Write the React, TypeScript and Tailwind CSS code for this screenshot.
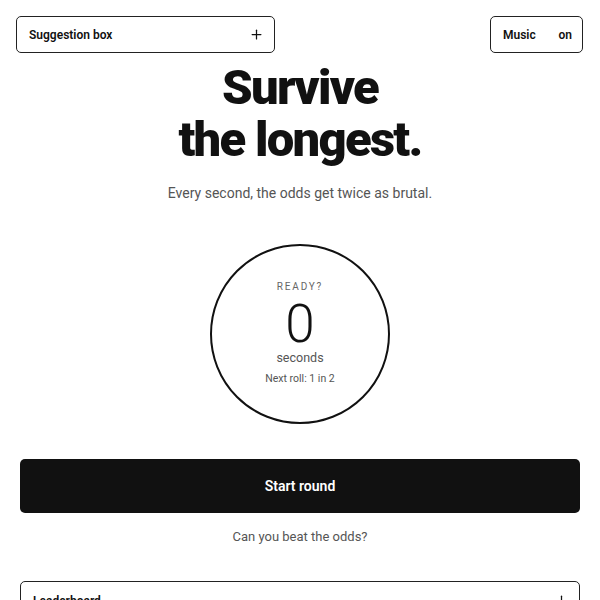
import React from "react";
import { Plus } from "lucide-react";

export default function App() {
  return (
    <div
      className="w-[600px] h-[600px] overflow-hidden bg-white text-[#111]"
      style={{ fontFamily: "Roboto, 'Liberation Sans', sans-serif" }}
    >
      <div className="flex justify-between pt-4 pl-4 pr-[17px]">
        <button className="w-[259px] h-[37px] border-[1.5px] border-[#222] rounded-[5px] pl-3 pr-[10px] flex items-center justify-between bg-white">
          <span className="text-[12px] font-semibold">Suggestion box</span>
          <Plus size={15} strokeWidth={2} />
        </button>
        <button className="w-[93px] h-[37px] border-[1.5px] border-[#222] rounded-[5px] pl-3 pr-[10px] flex items-center justify-between bg-white">
          <span className="text-[12px] font-semibold">Music</span>
          <span className="text-[12px] font-semibold">on</span>
        </button>
      </div>

      <h1 className="mt-[9px] text-center text-[49px] leading-[52px] font-black tracking-[-0.035em]">
        Survive
        <br />
        the longest.
      </h1>

      <p className="mt-4 text-center text-[14px] leading-[22px] text-[#555]">
        Every second, the odds get twice as brutal.
      </p>

      <div className="mt-[40px] flex justify-center">
        <div className="w-[180px] h-[180px] rounded-full border-2 border-[#111] flex flex-col items-center pt-[35px]">
          <div className="text-[10px] leading-[12px] tracking-[0.18em] text-[#666]">READY?</div>
          <div className="mt-[6px] text-[53px] leading-[51px] font-light text-[#111]">0</div>
          <div className="text-[12.5px] leading-[16px] text-[#555]">seconds</div>
          <div className="mt-[6px] text-[10.5px] leading-[14px] text-[#555]">Next roll: 1 in 2</div>
        </div>
      </div>

      <div className="px-5 mt-[35px]">
        <button className="w-full h-[54px] rounded-[5px] bg-[#111] text-white text-[14px] font-semibold">
          Start round
        </button>
      </div>

      <p className="mt-[14px] text-center text-[13px] leading-[20px] text-[#555]">
        Can you beat the odds?
      </p>

      <div className="mx-5 mt-[34px] h-[60px] border-[1.5px] border-[#222] rounded-[5px] pl-3 pr-[10px] pt-[10px] flex items-start justify-between">
        <span className="text-[12px] font-semibold">Leaderboard</span>
        <Plus size={15} strokeWidth={2} className="mt-[1px]" />
      </div>
    </div>
  );
}
